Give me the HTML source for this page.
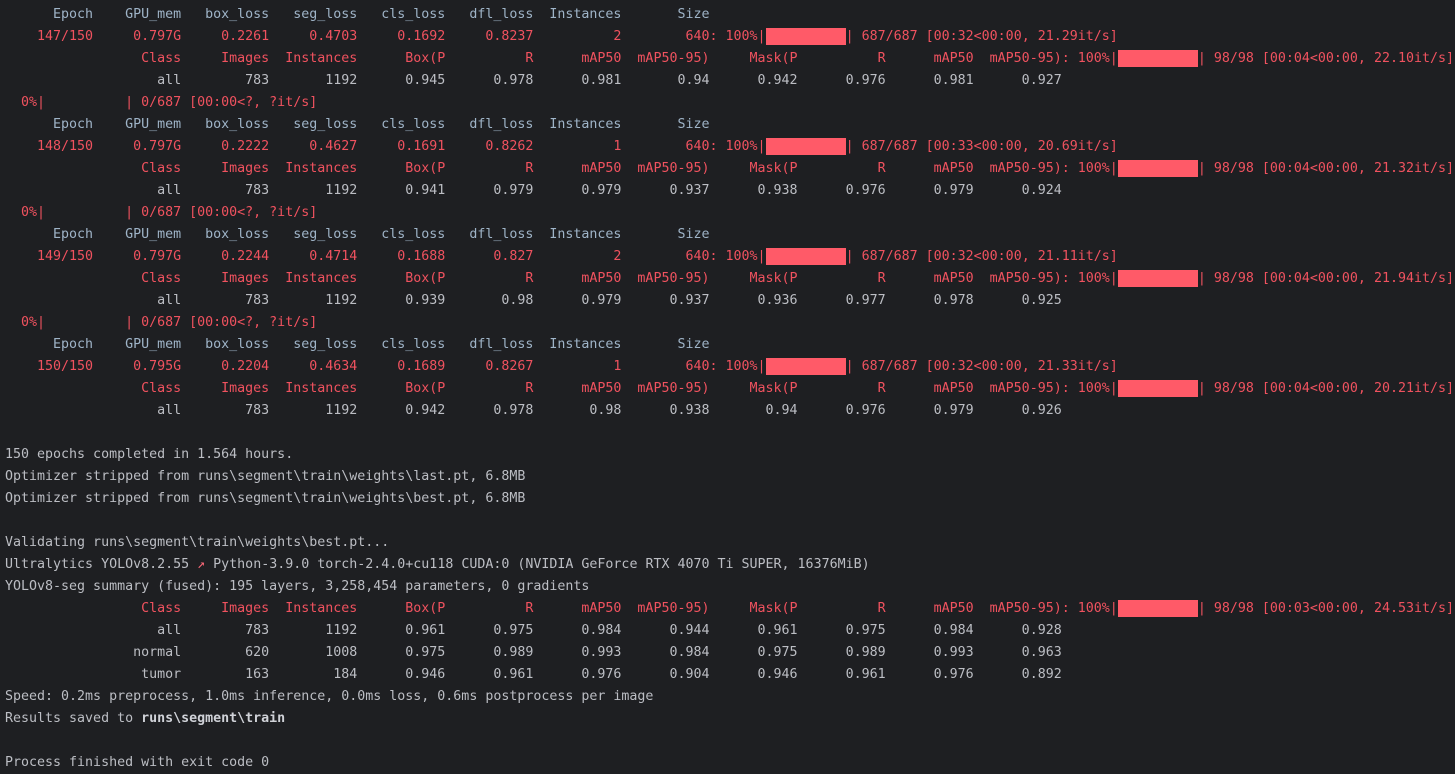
<!DOCTYPE html>
<html><head><meta charset="utf-8"><style>
html,body{margin:0;padding:0;background:#1e1f22;width:1455px;height:774px;overflow:hidden}
pre{margin:0;padding:4px 0 0 5px;font-family:"DejaVu Sans Mono","Liberation Mono",monospace;font-size:13.31px;line-height:22px;color:#bcbec4;white-space:pre}
.r{color:#f0525f}
.h{color:#9fb4c8}
.b{background:#ff5a68;padding:1px 0}
b{font-weight:bold;color:#d0d2d8}
.rk{color:#ff6a7a}
</style></head><body><pre><span class="h">      Epoch    GPU_mem   box_loss   seg_loss   cls_loss   dfl_loss  Instances       Size</span>
<span class="r">    147/150     0.797G     0.2261     0.4703     0.1692     0.8237          2        640: 100%|<span class="b">          </span>| 687/687 [00:32&lt;00:00, 21.29it/s]</span>
<span class="r">                 Class     Images  Instances      Box(P          R      mAP50  mAP50-95)     Mask(P          R      mAP50  mAP50-95): 100%|<span class="b">          </span>| 98/98 [00:04&lt;00:00, 22.10it/s]</span>
                   all        783       1192      0.945      0.978      0.981       0.94      0.942      0.976      0.981      0.927
<span class="r">  0%|          | 0/687 [00:00&lt;?, ?it/s]</span>
<span class="h">      Epoch    GPU_mem   box_loss   seg_loss   cls_loss   dfl_loss  Instances       Size</span>
<span class="r">    148/150     0.797G     0.2222     0.4627     0.1691     0.8262          1        640: 100%|<span class="b">          </span>| 687/687 [00:33&lt;00:00, 20.69it/s]</span>
<span class="r">                 Class     Images  Instances      Box(P          R      mAP50  mAP50-95)     Mask(P          R      mAP50  mAP50-95): 100%|<span class="b">          </span>| 98/98 [00:04&lt;00:00, 21.32it/s]</span>
                   all        783       1192      0.941      0.979      0.979      0.937      0.938      0.976      0.979      0.924
<span class="r">  0%|          | 0/687 [00:00&lt;?, ?it/s]</span>
<span class="h">      Epoch    GPU_mem   box_loss   seg_loss   cls_loss   dfl_loss  Instances       Size</span>
<span class="r">    149/150     0.797G     0.2244     0.4714     0.1688      0.827          2        640: 100%|<span class="b">          </span>| 687/687 [00:32&lt;00:00, 21.11it/s]</span>
<span class="r">                 Class     Images  Instances      Box(P          R      mAP50  mAP50-95)     Mask(P          R      mAP50  mAP50-95): 100%|<span class="b">          </span>| 98/98 [00:04&lt;00:00, 21.94it/s]</span>
                   all        783       1192      0.939       0.98      0.979      0.937      0.936      0.977      0.978      0.925
<span class="r">  0%|          | 0/687 [00:00&lt;?, ?it/s]</span>
<span class="h">      Epoch    GPU_mem   box_loss   seg_loss   cls_loss   dfl_loss  Instances       Size</span>
<span class="r">    150/150     0.795G     0.2204     0.4634     0.1689     0.8267          1        640: 100%|<span class="b">          </span>| 687/687 [00:32&lt;00:00, 21.33it/s]</span>
<span class="r">                 Class     Images  Instances      Box(P          R      mAP50  mAP50-95)     Mask(P          R      mAP50  mAP50-95): 100%|<span class="b">          </span>| 98/98 [00:04&lt;00:00, 20.21it/s]</span>
                   all        783       1192      0.942      0.978       0.98      0.938       0.94      0.976      0.979      0.926

150 epochs completed in 1.564 hours.
Optimizer stripped from runs\segment\train\weights\last.pt, 6.8MB
Optimizer stripped from runs\segment\train\weights\best.pt, 6.8MB

Validating runs\segment\train\weights\best.pt...
Ultralytics YOLOv8.2.55 <span class="rk">&#x2197;</span> Python-3.9.0 torch-2.4.0+cu118 CUDA:0 (NVIDIA GeForce RTX 4070 Ti SUPER, 16376MiB)
YOLOv8-seg summary (fused): 195 layers, 3,258,454 parameters, 0 gradients
<span class="r">                 Class     Images  Instances      Box(P          R      mAP50  mAP50-95)     Mask(P          R      mAP50  mAP50-95): 100%|<span class="b">          </span>| 98/98 [00:03&lt;00:00, 24.53it/s]</span>
                   all        783       1192      0.961      0.975      0.984      0.944      0.961      0.975      0.984      0.928
                normal        620       1008      0.975      0.989      0.993      0.984      0.975      0.989      0.993      0.963
                 tumor        163        184      0.946      0.961      0.976      0.904      0.946      0.961      0.976      0.892
Speed: 0.2ms preprocess, 1.0ms inference, 0.0ms loss, 0.6ms postprocess per image
Results saved to <b>runs\segment\train</b>

Process finished with exit code 0</pre></body></html>
